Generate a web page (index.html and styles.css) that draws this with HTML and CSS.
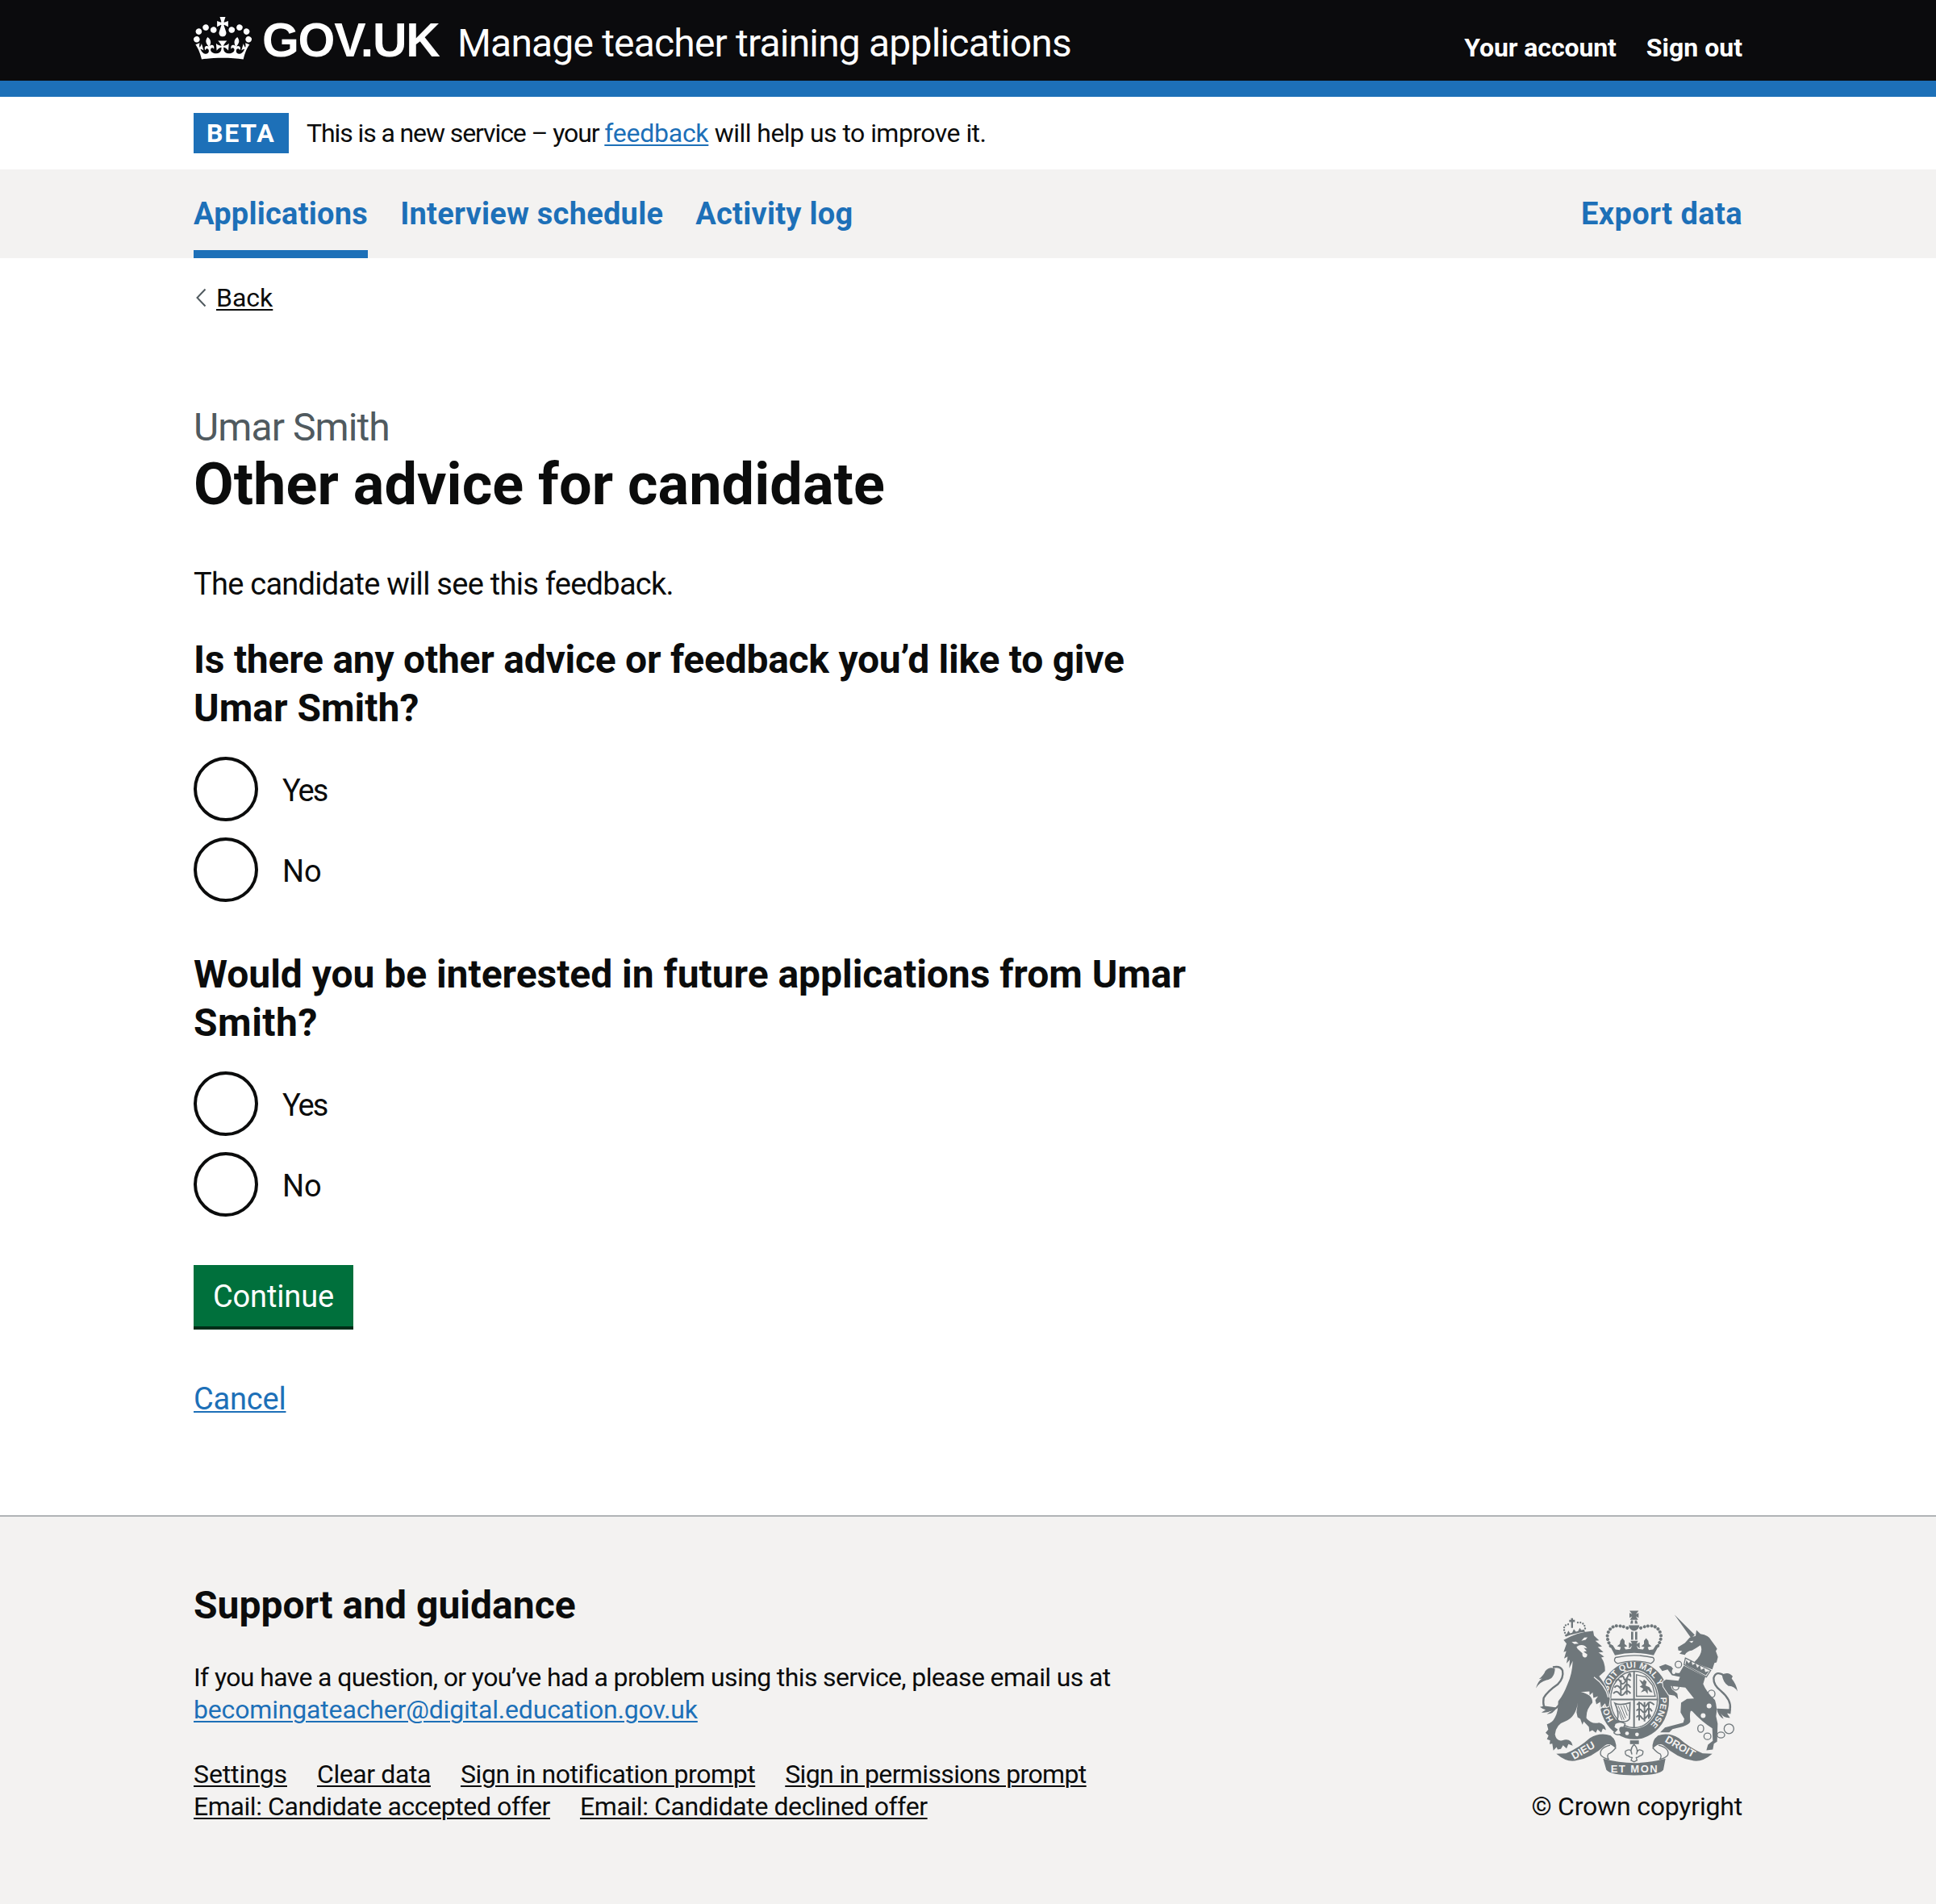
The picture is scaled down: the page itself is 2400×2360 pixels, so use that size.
FILE: index.html
```html
<!DOCTYPE html>
<html lang="en">
<head>
<meta charset="utf-8">
<title>Other advice for candidate – Manage teacher training applications</title>
<link rel="stylesheet" href="styles.css">
</head>
<body>
<header class="header">
  <div class="container header-row">
    <svg class="crown" viewBox="0 0 132 97" aria-hidden="true"><path fill="currentColor" fill-rule="evenodd" d="M25 30.2c3.5 1.5 7.7-.2 9.1-3.7 1.5-3.6-.2-7.8-3.9-9.2-3.6-1.4-7.6.3-9.1 3.9-1.4 3.5.3 7.5 3.9 9zM9 39.5c3.6 1.5 7.8-.2 9.2-3.7 1.5-3.6-.2-7.8-3.9-9.1-3.6-1.5-7.6.2-9.1 3.8-1.4 3.5.3 7.5 3.8 9zM4.4 57.2c3.5 1.5 7.7-.2 9.1-3.8 1.5-3.6-.2-7.7-3.9-9.1-3.5-1.5-7.6.3-9.1 3.8-1.4 3.5.3 7.6 3.9 9.1zm38.3-21.4c3.5 1.5 7.7-.2 9.1-3.8 1.5-3.6-.2-7.7-3.9-9.1-3.6-1.5-7.6.3-9.1 3.8-1.3 3.6.4 7.7 3.9 9.1zm64.4-5.6c-3.6 1.5-7.8-.2-9.1-3.7-1.5-3.6.2-7.8 3.8-9.2 3.6-1.4 7.7.3 9.2 3.9 1.3 3.5-.4 7.5-3.9 9zm15.9 9.3c-3.6 1.5-7.7-.2-9.1-3.7-1.5-3.6.2-7.8 3.7-9.1 3.6-1.5 7.7.2 9.2 3.8 1.5 3.5-.3 7.5-3.8 9zm4.7 17.7c-3.6 1.5-7.8-.2-9.2-3.8-1.5-3.6.2-7.7 3.9-9.1 3.6-1.5 7.7.3 9.2 3.8 1.3 3.5-.4 7.6-3.9 9.1zM89.3 35.8c-3.6 1.5-7.8-.2-9.2-3.8-1.4-3.6.2-7.7 3.9-9.1 3.6-1.5 7.7.3 9.2 3.8 1.4 3.6-.3 7.7-3.9 9.1zM69.7 17.7l8.9 4.7V9.3l-8.9 2.8c-.2-.3-.5-.6-.9-.9L72.4 0H59.6l3.5 11.2c-.3.3-.6.5-.9.9l-8.8-2.8v13.1l8.8-4.7c.3.3.6.7.9.9l-5 15.4v.1c-.2.8-.4 1.6-.4 2.4 0 4.1 3.1 7.5 7 8.1h.2c.3 0 .7.1 1 .1.4 0 .7 0 1-.1h.2c4-.6 7.1-4.1 7.1-8.1 0-.8-.1-1.7-.4-2.4V34l-5.1-15.4c.4-.2.7-.6 1-.9zM66 92.8c16.9 0 32.8 1.1 47.1 3.2 4-16.9 8.9-26.7 14-33.5l-9.6-3.4c1 4.9 1.1 7.2 0 10.2-1.5-1.4-3-4.3-4.2-8.7L108.6 76c2.8-2 5-3.2 7.5-3.3-4.4 9.4-10 11.9-13.6 11.2-4.3-.8-6.3-4.6-5.6-7.9 1-4.7 5.7-5.9 8-.5 4.3-8.7-3-11.4-7.6-8.8 7.1-7.2 7.9-13.5 2.1-21.1-8 6.1-8.1 12.3-4.5 20.8-4.7-5.4-12.1-2.5-9.5 6.2 3.4-5.2 7.9-2 7.2 3.1-.6 4.3-6.4 7.8-13.5 7.2-10.3-.9-10.9-8-11.2-13.8 2.5-.5 7.1 1.8 11 7.3L80.2 60c-4.1 4.4-8 5.3-12.3 5.4 1.4-4.4 8-11.6 8-11.6H55.5s6.4 7.2 7.9 11.6c-4.2-.1-8-1-12.3-5.4l1.4 16.4c3.9-5.5 8.5-7.7 10.9-7.3-.3 5.8-.9 12.8-11.1 13.8-7.2.6-12.9-2.9-13.5-7.2-.7-5 3.8-8.3 7.1-3.1 2.7-8.7-4.6-11.6-9.4-6.2 3.7-8.5 3.6-14.7-4.6-20.8-5.8 7.6-5 13.9 2.2 21.1-4.7-2.6-11.9.1-7.7 8.8 2.3-5.5 7.1-4.2 8.1.5.7 3.3-1.3 7.1-5.7 7.9-3.5.7-9-1.8-13.5-11.2 2.5.1 4.7 1.3 7.5 3.3l-4.7-15.4c-1.2 4.4-2.7 7.2-4.3 8.7-1.1-3-.9-5.3 0-10.2l-9.5 3.4c5 6.9 9.9 16.7 14 33.5 14.8-2.1 30.8-3.2 47.7-3.2z"/></svg>
    <span class="wordmark">GOV.UK</span>
    <span class="service">Manage teacher training applications</span>
    <nav class="account"><a class="your-account" href="#">Your account</a><a href="#">Sign out</a></nav>
  </div>
</header>

<div class="container phase">
  <strong class="tag">BETA</strong>
  <p class="phase-text">This is a new service – your <a class="link feedback" href="#">feedback</a><span class="phase-end"> will help us to improve it.</span></p>
</div>

<nav class="primary">
  <div class="container primary-row">
    <a class="current" href="#">Applications</a>
    <a class="interviews" href="#">Interview schedule</a>
    <a href="#">Activity log</a>
    <a class="export" href="#">Export data</a>
  </div>
</nav>

<main class="container main">
  <a class="back" href="#"><svg class="chevron" viewBox="0 0 14 24" aria-hidden="true"><path d="M12.5 1.5 2.5 12l10 10.500" fill="none" stroke="#505a5f" stroke-width="2"/></svg><span class="underlined">Back</span></a>
  <span class="caption">Umar Smith</span>
  <h1 class="title">Other advice for candidate</h1>
  <p class="intro">The candidate will see this feedback.</p>

  <form>
    <fieldset class="question">
      <legend class="legend"><span class="q-one">Is there any other advice or feedback you’d like to give</span><br>Umar Smith?</legend>
      <label class="radio"><input class="dot" type="radio" name="advice"><span class="option yes">Yes</span></label>
      <label class="radio"><input class="dot" type="radio" name="advice"><span class="option">No</span></label>
    </fieldset>
    <fieldset class="question">
      <legend class="legend"><span class="q-two">Would you be interested in future applications from Umar</span><br><span class="q-end">Smith?</span></legend>
      <label class="radio"><input class="dot" type="radio" name="future"><span class="option yes">Yes</span></label>
      <label class="radio"><input class="dot" type="radio" name="future"><span class="option">No</span></label>
    </fieldset>
    <button class="button" type="button">Continue</button>
  </form>
  <a class="link cancel" href="#">Cancel</a>
</main>

<footer class="footer">
  <div class="container footer-row">
    <div class="support">
      <h2 class="support-title">Support and guidance</h2>
      <p class="support-text">If you have a question, or you’ve had a problem using this service, please email us at<br><a class="link email" href="#">becomingateacher@digital.education.gov.uk</a></p>
      <ul class="links">
        <li><a class="s-settings" href="#">Settings</a></li>
        <li><a href="#">Clear data</a></li>
        <li><a href="#">Sign in notification prompt</a></li>
        <li><a class="s-permissions" href="#">Sign in permissions prompt</a></li>
        <li><a href="#">Email: Candidate accepted offer</a></li>
        <li><a href="#">Email: Candidate declined offer</a></li>
      </ul>
    </div>
    <div class="copyright">
      <svg class="arms" viewBox="72 47 750 614" aria-hidden="true">
        <defs>
          <path id="motto-left" d="M361 454A99 117 0 0 1 340 359"/>
          <path id="motto-top" d="M341 349A99 117 0 0 1 536 373"/>
          <path id="motto-right" d="M536 370A99 117 0 0 1 470 489"/>
        </defs>
        <g class="ink">
          <!-- royal crown -->
          <path d="M420 48h34l-10 13 10-5v18l-10-5 8 13h-30l8-13-10 5V56l10 5zM426 84h7v12h-10zM440 84h7l4 12h-11zM417 102h40q-2 18-20 21-18-3-20-21z"/>
          <path d="M426 126h8v30h-8zM441 126h8v30h-8z"/>
          <path d="M412 112Q350 88 338 138 336 160 354 186M462 112Q525 88 537 138 539 160 521 186" fill="none" stroke="#6f777b" stroke-width="12" stroke-dasharray="0.1 13.500" stroke-linecap="round"/>
          <path d="M344 172L358 176 368 192 384 194 388 184 374 180 384 172 386 160 394 150 402 160 402 172 412 180 400 184 406 192 424 190 430 178 418 188V166L430 172 424 160H452L446 172 458 166V188L446 178 452 190 470 192 476 184 464 180 474 172 474 160 482 150 490 160 492 172 502 180 488 184 492 194 508 192 518 176 532 172 510 214Q437 196 366 214Z"/>
          <!-- garter and shield -->
          <path fill-rule="evenodd" d="M438 236A129 145 0 1 0 438.100 236ZM437 267A92 110 0 1 1 436.900 267Z"/>
          <path d="M368 222Q437 206 508 222 518 234 500 244 437 226 376 244 358 236 368 222Z" fill="#f3f2f1" stroke="#6f777b" stroke-width="4"/>
          <ellipse cx="437" cy="378" rx="87" ry="105" fill="none" stroke="#6f777b" stroke-width="4"/>
          <path d="M437 272V484M348 378H526" fill="none" stroke="#6f777b" stroke-width="6"/>
          <path d="M368 312q10-16 18 0t18 0 20-4M364 334q10-14 20 0t18-4 22 4M360 356q12-14 22 0t20-2 22 2M386 296q10-10 14 4t14-8 10 2M388 306v52M410 296v64M448 398q10-14 20 0t18-2 26 2M446 420q10-14 20 0t18-2 20 4M446 444q10-14 18 0t20-2 14 2M456 386v70M476 388v72M492 390v60" fill="none" stroke="#6f777b" stroke-width="6"/>
          <path d="M446 366V286L480 294 506 326 516 366Z" fill="none" stroke="#6f777b" stroke-width="4"/>
          <path d="M456 304L470 312 474 304 484 312 480 326 494 332 506 352 496 350 488 340 488 358 478 346 462 352 472 338 458 330 468 324Z"/>
          <path d="M366 392Q386 402 422 390L420 450Q412 466 374 458 384 430 366 392Z" fill="none" stroke="#6f777b" stroke-width="5"/>
          <path d="M378 402L400 454M388 402L406 448M398 400L412 438M408 398L416 422M380 420L392 454" stroke="#6f777b" stroke-width="3"/>
          <g class="motto ring">
            <text><textPath href="#motto-left">HON</textPath></text>
            <text><textPath href="#motto-top">SOIT QUI MAL Y</textPath></text>
            <text><textPath href="#motto-right">PENSE</textPath></text>
          </g>
          <path d="M366 468Q384 456 404 468L398 482Q382 478 384 492L390 506Q372 514 362 502L374 490 362 482Z" fill="#f3f2f1" stroke="#6f777b" stroke-width="4"/>
          <g class="paper"><circle cx="411" cy="504" r="7"/><circle cx="448" cy="508" r="7"/></g>
          <!-- lion -->
          <g transform="translate(45 30)">
            <path class="edged" d="M130 127Q180 97 240 93L243 110 262 128 248 130 273 151 257 153 278 172 260 173 281 189 270 192Q285 212 284 242L262 262Q285 290 294 320L302 345 298 373 290 376 284 362 270 378 266 357 252 366 248 350 258 336 241 342 238 322 227 332 226 318 194 320Q240 330 237 360Q213 385 215 418Q235 442 262 434Q284 440 288 462L276 456 270 471 256 459 250 472 237 462 226 468 224 450 205 430 200 442 192 420 182 414 178 395 183 360Q175 415 135 430Q102 440 98 478Q103 505 125 500Q158 490 164 520L148 514 141 530 128 518 120 532 108 534 104 525 92 538 88 512 78 514 80 500 68 496 74 482 63 472 73 460 68 440Q88 436 98 415Q110 395 110 355Q130 330 145 290Q162 255 164 205L151 232 153 200 141 214 145 188 132 196 140 168 130 172 141 140Z"/>
            <path d="M124 352Q104 392 72 388 50 382 56 342 70 318 108 292 132 268 126 240 118 222 90 228" fill="none" stroke="#6f777b" stroke-width="7"/>
            <path d="M27 306Q34 280 50 270L38 272Q56 258 62 242 78 224 98 234 96 272 66 276 42 282 27 306ZM60 372L42 376Q54 386 64 386L48 396Q66 400 90 388L68 402Q90 404 104 378Z"/>
            <path d="M134 108L142 104 148 92 154 102 162 100 168 86 176 96 184 94 190 82 196 90 206 88 210 97Q172 101 138 115Z"/>
            <path d="M135 100Q124 70 150 68M210 84Q208 58 180 62" fill="none" stroke="#6f777b" stroke-width="7" stroke-dasharray="0.1 10" stroke-linecap="round"/>
            <path d="M157 46h8v6h7v8h-7v22h-7V60h-7v-8h7z"/>
            <g class="paper"><path d="M160 134L176 133 186 140 170 142ZM196 130L207 118 219 117 212 126ZM178 152Q193 140 210 149L218 158 205 156 216 168 204 170 218 180Q218 192 209 192 198 190 200 176L182 160Z"/></g>
            <path d="M243 265Q286 296 296 340" fill="none" stroke="#f3f2f1" stroke-width="4"/>
          </g>
          <!-- unicorn -->
          <g transform="translate(420 30)">
            <path d="M167 32L243 108 229 119ZM180 154L206 138 224 118 246 112 249 90 264 104Q295 108 304 128L320 150 326 160 321 168 329 190 324 210 316 212 308 236 285 228 240 210Q278 175 264 146 246 158 232 166 214 168 206 182L186 178 196 168 182 166Z"/>
            <path class="edged" d="M202 222L282 264 274 290Q286 320 318 350 328 380 322 410L328 438 326 505 314 512 310 534 286 537 292 516 310 502 308 455Q268 430 234 392 222 380 226 430 224 446 160 458L148 470 114 470 132 452 200 434 204 420 190 396 192 360 214 346 240 344 208 304 154 298 158 310 178 326 181 347 168 334 146 330 126 300 124 282 136 274 182 278 188 264 158 258 142 236 122 242 110 226 134 217 156 226 174 250 186 250Z"/>
            <path d="M354 260Q322 238 313 268 312 296 340 316 380 350 374 384 360 412 330 384" fill="none" stroke="#6f777b" stroke-width="7"/>
            <path d="M344 256Q368 242 384 262L380 270Q398 292 402 318 388 296 368 298 348 286 344 256ZM378 384L376 402 362 398 374 416Q350 418 340 400L350 420Q330 412 324 382Z"/>
            <path d="M208 194L302 240 286 264 203 218Z" fill="#f3f2f1" stroke="#6f777b" stroke-width="4"/>
            <path d="M208 218L212 202 220 214 230 202 234 220 246 214 252 230 262 220 266 238 278 232 282 246 296 242 284 258Z"/>
            <g fill="none" stroke="#6f777b" stroke-width="4">
              <ellipse cx="182" cy="218" rx="12" ry="12"/><ellipse cx="172" cy="300" rx="12" ry="13"/><ellipse cx="305" cy="327" rx="13" ry="14"/><ellipse cx="265" cy="456" rx="11" ry="14"/><ellipse cx="290" cy="485" rx="13" ry="12"/><ellipse cx="340" cy="480" rx="14" ry="11"/><circle cx="370" cy="457" r="18"/>
            </g>
            <g class="paper"><ellipse cx="165" cy="244" rx="7" ry="10"/><circle cx="296" cy="372" r="9"/><circle cx="274" cy="408" r="9"/><path d="M222 132L238 130 232 138Z"/></g>
          </g>
          <!-- ribbon and fleur-de-lis -->
          <path d="M422 530h33v14h-33z"/>
          <path d="M437 545Q454 562 446 582 450 556 470 570 472 586 458 588L452 592 445 594 448 604 437 610 426 604 430 594 422 592 416 588Q402 586 405 570 426 556 429 582 420 562 437 545Z" fill="none" stroke="#6f777b" stroke-width="4"/>
          <path d="M148 580L184 578Q230 560 272 522 310 498 350 512 374 530 370 562 348 536 330 548 280 594 226 604 190 616 148 580Z"/>
          <path d="M728 580L692 578Q646 560 604 522 566 498 526 512 502 530 506 562 528 536 546 548 596 594 650 604 686 616 728 580Z"/>
          <g fill="none" stroke="#6f777b" stroke-width="4"><path d="M348 548Q304 560 314 586 326 598 342 600M369 558Q352 578 342 580 334 590 344 602"/><path d="M528 548Q572 560 562 586 550 598 534 600M507 558Q524 578 534 580 542 590 532 602"/></g>
          <path d="M322 598Q438 630 554 598L546 640Q530 660 438 660 350 660 334 640Z"/>
          <g class="motto large">
            <text transform="translate(214 602) rotate(-30)">DIEU</text>
            <text transform="translate(550 534) rotate(30)">DROIT</text>
            <text x="350" y="650" textLength="174">ET MON</text>
          </g>
        </g>
      </svg>
      <a class="crown-link" href="#">© Crown copyright</a>
    </div>
  </div>
</footer>
</body>
</html>
```
FILE: styles.css
```css
* { box-sizing: border-box; }

body {
  margin: 0;
  background: #fff;
  color: #0b0c0c;
  font-family: Roboto, "Liberation Sans", sans-serif;
  font-size: 32px;
  line-height: 40px;
}

a { color: inherit; text-decoration: none; }
p, h1, h2, ul, fieldset { margin: 0; padding: 0; border: 0; }
.container { width: 1920px; margin: 0 auto; }
.link { color: #1d70b8; }
.link, .underlined, .links a {
  text-decoration: underline;
  text-decoration-thickness: 2px;
  text-underline-offset: 3px;
}

/* Header */
.header { height: 120px; background: #0b0b0d; border-bottom: 20px solid #1d70b8; color: #fff; }
.header-row { display: flex; align-items: flex-start; height: 100px; }
.crown { width: 72px; height: 53px; margin-top: 21px; }
.wordmark {
  width: 238px;
  margin: 20px 0 0 13px;
  font: 700 59px/60px "Liberation Sans", sans-serif;
  letter-spacing: -1.3px;
}
.service { margin: 24px 0 0 4px; font-size: 48px; line-height: 60px; letter-spacing: -.82px; white-space: nowrap; }
.account { display: flex; gap: 37px; margin: 39px 0 0 auto; font-weight: 700; }
.your-account { letter-spacing: -.1px; }

/* Phase banner */
.phase { display: flex; align-items: flex-start; height: 90px; padding-top: 20px; }
.tag {
  width: 118px;
  height: 50px;
  padding-left: 16px;
  background: #1d70b8;
  color: #fff;
  line-height: 50px;
  letter-spacing: 1.8px;
}
.phase-text { margin: 5px 0 0 22px; letter-spacing: -1.1px; white-space: nowrap; }
.feedback { letter-spacing: -.26px; }
.phase-end { letter-spacing: -.54px; }

/* Primary navigation */
.primary { background: #f3f2f1; }
.primary-row {
  display: flex;
  gap: 40px;
  height: 110px;
  padding-top: 30px;
  color: #1d70b8;
  font-size: 38px;
  font-weight: 700;
  line-height: 50px;
  letter-spacing: .25px;
}
.current { border-bottom: 10px solid #1d70b8; }
.export { margin-left: auto; letter-spacing: .4px; }

/* Page content */
.main { height: 1558px; padding-top: 29px; }
.back { display: flex; align-items: center; gap: 12px; }
.chevron { width: 14px; height: 24px; margin-left: 2px; }
.caption { display: block; margin-top: 111px; color: #505a5f; font-size: 48px; line-height: 60px; letter-spacing: -.9px; }
.title { margin-top: 3px; font-size: 72px; line-height: 75px; letter-spacing: .06px; }
.intro { margin-top: 61px; font-size: 38px; line-height: 50px; letter-spacing: -.73px; }
.question { margin-top: 39px; }
.question + .question { margin-top: 60px; }
.legend { padding: 0; margin-bottom: 30px; font-size: 48px; font-weight: 700; line-height: 60px; white-space: nowrap; }
.q-one { letter-spacing: -.25px; }
.q-two { letter-spacing: -.04px; }
.q-end { letter-spacing: .5px; }
.radio { display: flex; align-items: center; gap: 30px; height: 80px; font-size: 38px; line-height: 50px; }
.radio + .radio { margin-top: 20px; }
.option { padding-top: 3px; }
.dot { appearance: none; width: 80px; height: 80px; margin: 0; border: 4px solid #0b0c0c; border-radius: 50%; }
.yes { letter-spacing: -2px; }
.button {
  display: block;
  width: 198px;
  height: 76px;
  margin: 60px 0 65px;
  padding: 2px 0 0;
  border: 0;
  background: #00703c;
  box-shadow: 0 4px 0 #002d18;
  color: #fff;
  font: 400 38px/74px Roboto, sans-serif;
  letter-spacing: -.15px;
}
.cancel { font-size: 38px; line-height: 50px; letter-spacing: -.2px; text-underline-offset: 2px; }

/* Footer */
.footer { height: 482px; padding-top: 80px; border-top: 2px solid #b1b4b6; background: #f3f2f1; }
.footer-row { display: flex; justify-content: space-between; }
.support-title { font-size: 48px; line-height: 60px; }
.support-text { margin-top: 39px; letter-spacing: -.62px; white-space: nowrap; }
.email { letter-spacing: -.17px; }
.links { display: flex; flex-wrap: wrap; width: 1180px; margin-top: 40px; column-gap: 37px; list-style: none; letter-spacing: -.41px; }
.s-settings { letter-spacing: -.11px; }
.s-permissions { letter-spacing: -.63px; }
.copyright { display: flex; flex-direction: column; align-items: center; padding-top: 36px; }
.arms { width: 250px; height: 205px; }
.crown-link { margin-top: 18px; letter-spacing: -.2px; }
.ink { fill: #6f777b; }
.edged { stroke: #f3f2f1; stroke-width: 6; paint-order: stroke; }
.paper, .motto { fill: #f3f2f1; }
.motto { font: 700 32px "Liberation Sans", sans-serif; }
.ring { letter-spacing: 1px; }
.large { font-size: 39px; }
```
